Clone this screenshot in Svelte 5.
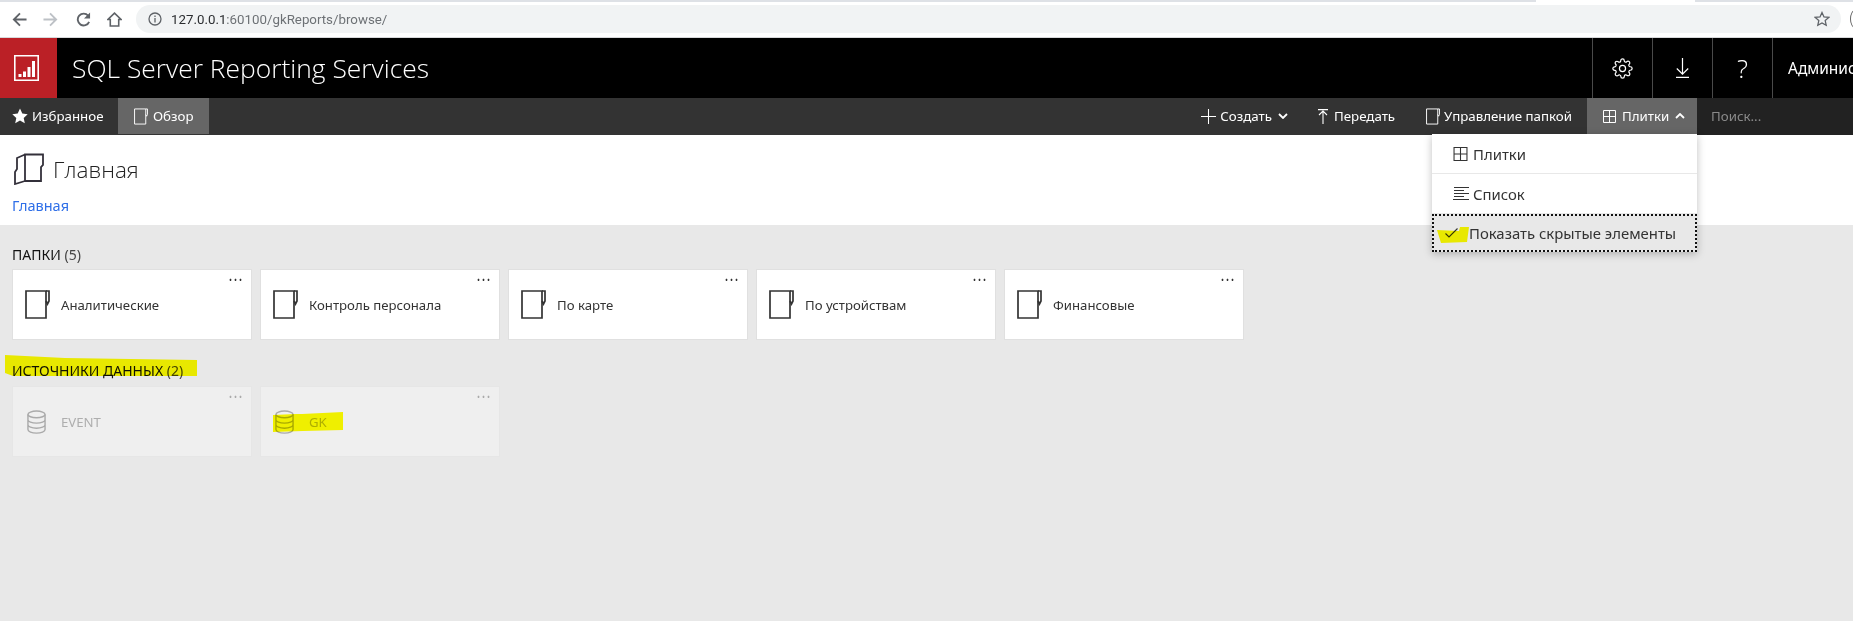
<script>
  const folders = ['Аналитические', 'Контроль персонала', 'По карте', 'По устройствам', 'Финансовые'];
  const sources = ['EVENT', 'GK'];
</script>

{#snippet folderIcon(cls)}
  <svg class={cls} viewBox="0 0 25 29" fill="none" stroke="currentColor" stroke-width="1.7">
    <path d="M1 1H21V28H1Z" />
    <path d="M21 1H24V11L22.500 14L21 11" />
  </svg>
{/snippet}

{#snippet gridIcon(cls)}
  <svg class={cls} viewBox="0 0 13 13" fill="none" stroke="currentColor" stroke-width="1">
    <path d="M.5.5h12v12H.5zM6.500.5v12M.5 6.500h12" />
  </svg>
{/snippet}

{#snippet dbIcon()}
  <svg class="db" viewBox="0 0 20 25" fill="none" stroke="currentColor" stroke-width="1.500">
    <ellipse cx="10" cy="4.500" rx="9" ry="3.500" />
    <path d="M1 4.500v16c0 2 4 3.700 9 3.700s9-1.700 9-3.700v-16M1 10c0 2 4 3.700 9 3.700s9-1.700 9-3.700M1 15.300c0 2 4 3.700 9 3.700s9-1.700 9-3.700" />
  </svg>
{/snippet}

<div class="page">
  <div class="tabstrip"><span class="tabgap"></span></div>

  <div class="chrome">
    <svg class="cicon first" viewBox="0 0 16 16" fill="none" stroke="#5f6368" stroke-width="2"><path d="M15.500 8H2M8.500 1.500 2 8l6.500 6.500" /></svg>
    <svg class="cicon" viewBox="0 0 16 16" fill="none" stroke="#bdc1c6" stroke-width="2"><path d="M.5 8H14M7.500 1.500 14 8l-6.500 6.500" /></svg>
    <svg class="cicon wide" viewBox="0 0 16 16" fill="none" stroke="#5f6368" stroke-width="2"><path d="M14 10.500A6.300 6.300 0 1 1 13 4" /><path d="M15 .5v6.500H8.500z" fill="#5f6368" stroke="none" /></svg>
    <svg class="cicon" viewBox="0 0 16 16" fill="none" stroke="#5f6368" stroke-width="1.700"><path d="M8 1.200 1 8h2.500v7h9V8H15z" /></svg>
    <div class="omnibox">
      <svg class="info" viewBox="0 0 14 14" fill="none" stroke="#5f6368" stroke-width="1.300"><circle cx="7" cy="7" r="6" /><path d="M7 6v4.500M7 3.500v1.400" /></svg>
      <span class="url"><span class="dark">127.0.0.1</span>:60100/gkReports/browse/</span>
      <svg class="star" viewBox="0 0 16 16" fill="none" stroke="#5f6368" stroke-width="1.300"><path d="m8 1.500 2 4.400 4.800.5-3.600 3.200 1 4.700L8 11.900l-4.200 2.400 1-4.700-3.600-3.200 4.800-.5z" /></svg>
    </div>
    <span class="avatar"></span>
  </div>

  <header class="header">
    <div class="brand">
      <svg class="logo" viewBox="0 0 25 26">
        <path fill="none" stroke="#fff" stroke-width="1.600" d="M.8.8h23.400v24.400H.8z" />
        <path fill="#fff" d="M4.500 19h3v3h-3zM9 16.500h3V22H9zM13.500 12h3v10h-3zM18 6h3v16h-3z" />
      </svg>
    </div>
    <div class="title">SQL Server Reporting Services</div>
    <div class="tools">
      <div class="tool">
        <svg class="gear" viewBox="0 0 24 24" fill="none" stroke="#fff" stroke-width="1.400"><circle cx="12" cy="12" r="3.500" /><path d="M19.400 15a1.650 1.650 0 0 0 .33 1.820l.06.06a2 2 0 0 1 0 2.830 2 2 0 0 1-2.830 0l-.06-.06a1.650 1.650 0 0 0-1.820-.33 1.650 1.650 0 0 0-1 1.510V21a2 2 0 0 1-2 2 2 2 0 0 1-2-2v-.09A1.650 1.650 0 0 0 9 19.400a1.650 1.650 0 0 0-1.820.33l-.06.06a2 2 0 0 1-2.830 0 2 2 0 0 1 0-2.830l.06-.06a1.650 1.650 0 0 0 .33-1.820 1.650 1.650 0 0 0-1.510-1H3a2 2 0 0 1-2-2 2 2 0 0 1 2-2h.09A1.650 1.650 0 0 0 4.600 9a1.650 1.650 0 0 0-.33-1.820l-.06-.06a2 2 0 0 1 0-2.830 2 2 0 0 1 2.830 0l.06.06a1.650 1.650 0 0 0 1.820.33H9a1.650 1.650 0 0 0 1-1.510V3a2 2 0 0 1 2-2 2 2 0 0 1 2 2v.09a1.650 1.650 0 0 0 1 1.510 1.650 1.650 0 0 0 1.820-.33l.06-.06a2 2 0 0 1 2.830 0 2 2 0 0 1 0 2.830l-.06.06a1.650 1.650 0 0 0-.33 1.820V9a1.650 1.650 0 0 0 1.510 1H21a2 2 0 0 1 2 2 2 2 0 0 1-2 2h-.09a1.650 1.650 0 0 0-1.510 1z" /></svg>
      </div>
      <div class="tool">
        <svg class="down" viewBox="0 0 13 20" fill="none" stroke="#fff" stroke-width="1.200"><path d="M6.500 0v16M.8 10.500l5.700 5.700 5.700-5.700M0 19.400h13" /></svg>
      </div>
      <div class="tool question">?</div>
      <div class="user">Администратор</div>
    </div>
  </header>

  <nav class="nav">
    <div class="nav-left">
      <div class="nav-item fav">
        <svg class="staricon" viewBox="0 0 16 16"><path fill="#fff" d="m8 .6 2.300 5 5.400.6-4 3.700 1.100 5.400L8 12.600l-4.800 2.700 1.100-5.400-4-3.700 5.400-.6z" /></svg>
        Избранное
      </div>
      <div class="nav-item browse active">
        {@render folderIcon('navfolder')}
        Обзор
      </div>
    </div>
    <div class="nav-right">
      <div class="nav-item create">
        <svg class="plus" viewBox="0 0 16 16" fill="none" stroke="#fff" stroke-width="1.100"><path d="M8 0v16M0 8h16" /></svg>
        Создать
        <svg class="chev" viewBox="0 0 10 6" fill="none" stroke="#fff" stroke-width="1.800"><path d="m1 1 4 4 4-4" /></svg>
      </div>
      <div class="nav-item upload">
        <svg class="up" viewBox="0 0 10 15" fill="none" stroke="#fff" stroke-width="1.100"><path d="M0 .6h10M5 15V2M1 6l4-4 4 4" /></svg>
        Передать
      </div>
      <div class="nav-item manage">
        {@render folderIcon('navfolder')}
        Управление папкой
      </div>
      <div class="nav-item tiles active">
        {@render gridIcon('navgrid')}
        Плитки
        <svg class="chev" viewBox="0 0 10 6" fill="none" stroke="#fff" stroke-width="1.800"><path d="m1 5 4-4 4 4" /></svg>
        <div class="menu">
          <div class="menu-item">
            {@render gridIcon('menugrid')}
            Плитки
          </div>
          <div class="menu-item">
            <svg class="lines" viewBox="0 0 16 14" fill="none" stroke="#333" stroke-width="1"><path d="M1 .5h15M1 3.500h10M1 6.500h15M1 9.500h10M0 12.500h16" /></svg>
            Список
          </div>
          <div class="menu-item focused">
            <svg class="check" viewBox="0 0 13 10" fill="none" stroke="#333" stroke-width="1.100"><path d="m.5 5.500 3.500 3.500 8.500-8.500" /></svg>
            Показать скрытые элементы
            <svg class="mark markcheck" viewBox="0 0 32 16" preserveAspectRatio="none"><path d="M0 3 22 4 23 0h9l-2 15-26 1z" /></svg>
          </div>
        </div>
      </div>
      <div class="search">Поиск...</div>
    </div>
  </nav>

  <section class="hero">
    <div class="hero-title">
      <svg class="homeicon" viewBox="0 0 30 32" fill="none" stroke="#33303a" stroke-width="1.800"><path d="M11 1.500H29V12L27 14V28H11ZM11 1.500 3 5V16L1 19V31L11 28" /></svg>
      <h1>Главная</h1>
    </div>
    <a class="crumb" href="#home">Главная</a>
  </section>

  <main class="content">
    <h2 class="section-title folders-title">ПАПКИ <span>(5)</span></h2>
    <div class="cards">
      {#each folders as name}
        <div class="card">
          <span class="dots">•••</span>
          {@render folderIcon('cardfolder')}
          <span class="name">{name}</span>
        </div>
      {/each}
    </div>

    <h2 class="section-title sources-title">
      ИСТОЧНИКИ ДАННЫХ <span>(2)</span>
      <svg class="mark marktitle" viewBox="0 0 192 21" preserveAspectRatio="none"><path d="M0 0 60 3 192 5v16H8L0 18z" /></svg>
    </h2>
    <div class="cards">
      {#each sources as name}
        <div class="card hidden">
          <span class="dots">•••</span>
          {@render dbIcon()}
          <span class="name">{name}</span>
          {#if name === 'GK'}
            <svg class="mark markgk" viewBox="0 0 71 20" preserveAspectRatio="none"><path d="M1 3 24 2h6l41-2v18l-40 1-30 1z" /></svg>
          {/if}
        </div>
      {/each}
    </div>
  </main>
</div>

<style>
  :global(body) {
    margin: 0;
    background: #e8e8e8;
  }
  .page {
    width: 1853px;
    height: 621px;
    overflow: hidden;
    font-family: "Noto Sans", "Open Sans", sans-serif;
    color: #333;
    background: #e8e8e8;
  }
  .tabstrip {
    height: 2px;
    background: #dee1e6;
    display: flex;
    padding-left: 1536px;
  }
  .tabgap {
    width: 159px;
    background: #fff;
  }
  .chrome {
    height: 36px;
    box-sizing: border-box;
    padding: 3px 0 4px 12px;
    background: #fff;
    border-bottom: 1px solid #d8d9db;
    display: flex;
    align-items: center;
    overflow: hidden;
  }
  .cicon {
    width: 15px;
    height: 15px;
    margin-left: 16px;
    flex: none;
  }
  .cicon.first {
    margin-left: 0;
  }
  .cicon.wide {
    margin-left: 18px;
  }
  .omnibox {
    margin-left: 14px;
    width: 1705px;
    height: 28px;
    box-sizing: border-box;
    padding: 0 12px;
    border-radius: 14px;
    background: #f1f3f4;
    display: flex;
    align-items: center;
    flex: none;
  }
  .info {
    width: 14px;
    height: 14px;
  }
  .url {
    margin-left: 9px;
    font-size: 13.300px;
    color: #6d7175;
    font-family: "Roboto", sans-serif;
  }
  .dark {
    color: #2b2d30;
  }
  .star {
    width: 16px;
    height: 16px;
    margin-left: auto;
    margin-right: -1px;
  }
  .avatar {
    width: 8px;
    height: 16px;
    margin-left: 9px;
    border: 1.500px solid #666;
    border-radius: 50%;
    flex: none;
  }
  .header {
    height: 60px;
    background: #000;
    display: flex;
    color: #fff;
  }
  .brand {
    width: 57px;
    background: #bb2026;
    display: flex;
    align-items: center;
    justify-content: center;
    padding-right: 5px;
    box-sizing: border-box;
  }
  .logo {
    width: 25px;
    height: 26px;
  }
  .title {
    margin-left: 15px;
    font-weight: 300;
    font-size: 26.400px;
    line-height: 60px;
    font-family: "Open Sans", sans-serif;
  }
  .tools {
    margin-left: auto;
    display: flex;
    width: 261px;
    flex: none;
  }
  .tool {
    width: 60px;
    border-left: 1px solid #4a4a4a;
    box-sizing: border-box;
    display: flex;
    align-items: center;
    justify-content: center;
  }
  .gear {
    width: 21px;
    height: 21px;
  }
  .down {
    width: 13px;
    height: 20px;
  }
  .question {
    font-weight: 300;
    font-size: 26px;
    font-family: "Open Sans", sans-serif;
  }
  .user {
    flex: 1;
    border-left: 1px solid #4a4a4a;
    padding-left: 15px;
    font-size: 15.500px;
    line-height: 60px;
    white-space: nowrap;
    overflow: hidden;
  }
  .nav {
    height: 37px;
    background: #333;
    display: flex;
    justify-content: space-between;
    color: #fff;
    font-size: 13.300px;
  }
  .nav-left,
  .nav-right {
    display: flex;
  }
  .nav-item {
    height: 36px;
    display: flex;
    align-items: center;
    white-space: nowrap;
  }
  .active {
    background: #666;
  }
  .fav {
    width: 118px;
    box-sizing: border-box;
    padding-left: 12px;
  }
  .staricon {
    width: 16px;
    height: 16px;
    margin-right: 4px;
  }
  .browse {
    padding: 0 16px;
    width: 91px;
    box-sizing: border-box;
  }
  :global(.navfolder) {
    width: 14px;
    height: 17px;
    margin-right: 5px;
    flex: none;
  }
  .manage :global(.navfolder) {
    margin-right: 4px;
  }
  .create {
    padding-right: 30px;
  }
  .plus {
    width: 15px;
    height: 15px;
    margin-right: 4px;
  }
  .chev {
    width: 10px;
    height: 6px;
    margin-left: 6px;
  }
  .up {
    width: 10px;
    height: 15px;
    margin-right: 6px;
  }
  .upload {
    padding-right: 31px;
  }
  .manage {
    padding-right: 15px;
  }
  .tiles {
    position: relative;
    width: 110px;
    box-sizing: border-box;
    padding-left: 16px;
  }
  :global(.navgrid) {
    width: 13px;
    height: 13px;
    margin-right: 6px;
  }
  .search {
    width: 156px;
    box-sizing: border-box;
    padding-left: 14px;
    height: 37px;
    line-height: 36px;
    background: #222;
    color: #8a8a8a;
  }
  .menu {
    position: absolute;
    top: 36px;
    right: 0;
    width: 265px;
    background: #fff;
    color: #333;
    box-shadow: 0 2px 8px rgba(0, 0, 0, 0.25);
    font-size: 14.900px;
    z-index: 5;
  }
  .menu-item {
    position: relative;
    height: 40px;
    display: flex;
    align-items: center;
    padding-left: 21px;
    box-sizing: border-box;
    border-bottom: 1px solid #e8e8e8;
  }
  :global(.menugrid) {
    width: 15px;
    height: 14px;
    margin-right: 5px;
  }
  .lines {
    width: 16px;
    height: 14px;
    margin-right: 4px;
  }
  .focused {
    height: 38px;
    border: 2px dotted #111;
    background: #e8e8e8;
    padding-left: 11px;
  }
  .check {
    width: 13px;
    height: 10px;
    margin-right: 11px;
  }
  .mark {
    position: absolute;
    fill: #ffff00;
    mix-blend-mode: multiply;
    pointer-events: none;
  }
  .markcheck {
    left: 3px;
    top: 11px;
    width: 32px;
    height: 16px;
  }
  .hero {
    height: 90px;
    background: #fff;
    box-sizing: border-box;
    padding: 18px 12px 0;
  }
  .hero-title {
    display: flex;
    align-items: center;
    height: 32px;
  }
  .homeicon {
    width: 30px;
    height: 32px;
    margin-left: 2px;
    margin-right: 9px;
  }
  h1 {
    margin: 0;
    font-weight: 300;
    font-size: 22.500px;
    color: #222;
    font-family: "Open Sans", sans-serif;
  }
  .crumb {
    display: block;
    margin-top: 10px;
    font-size: 14.500px;
    line-height: 20px;
    color: #2f6fe8;
    text-decoration: none;
  }
  .content {
    padding: 0 12px;
  }
  .section-title {
    position: relative;
    margin: 0;
    width: max-content;
    font-weight: 400;
    font-size: 14px;
    line-height: 20px;
    color: #111;
  }
  .section-title span {
    color: #444;
  }
  .folders-title {
    padding-top: 20px;
    padding-bottom: 4px;
  }
  .sources-title {
    padding-top: 21px;
    padding-bottom: 5px;
  }
  .marktitle {
    left: -7px;
    top: 15px;
    width: 192px;
    height: 21px;
  }
  .cards {
    display: flex;
    gap: 8px;
  }
  .card {
    position: relative;
    width: 240px;
    height: 71px;
    box-sizing: border-box;
    background: #fff;
    border: 1px solid #e0e0e0;
    display: flex;
    align-items: center;
    padding-left: 12px;
    color: #333;
  }
  .card.hidden {
    background: #efefef;
    border-color: #e6e6e6;
    color: #aeaeae;
  }
  :global(.cardfolder) {
    width: 25px;
    height: 29px;
    flex: none;
    margin-right: 11px;
  }
  .db {
    width: 19px;
    height: 24px;
    margin-left: 2px;
    margin-right: 15px;
    color: #aaa;
    flex: none;
  }
  .name {
    font-size: 13.200px;
  }
  .dots {
    position: absolute;
    top: 2px;
    right: 7px;
    font-size: 8px;
    letter-spacing: 2px;
    line-height: 16px;
    color: #333;
  }
  .hidden .dots {
    color: #aaa;
  }
  .markgk {
    left: 11px;
    top: 25px;
    width: 71px;
    height: 20px;
  }
</style>
